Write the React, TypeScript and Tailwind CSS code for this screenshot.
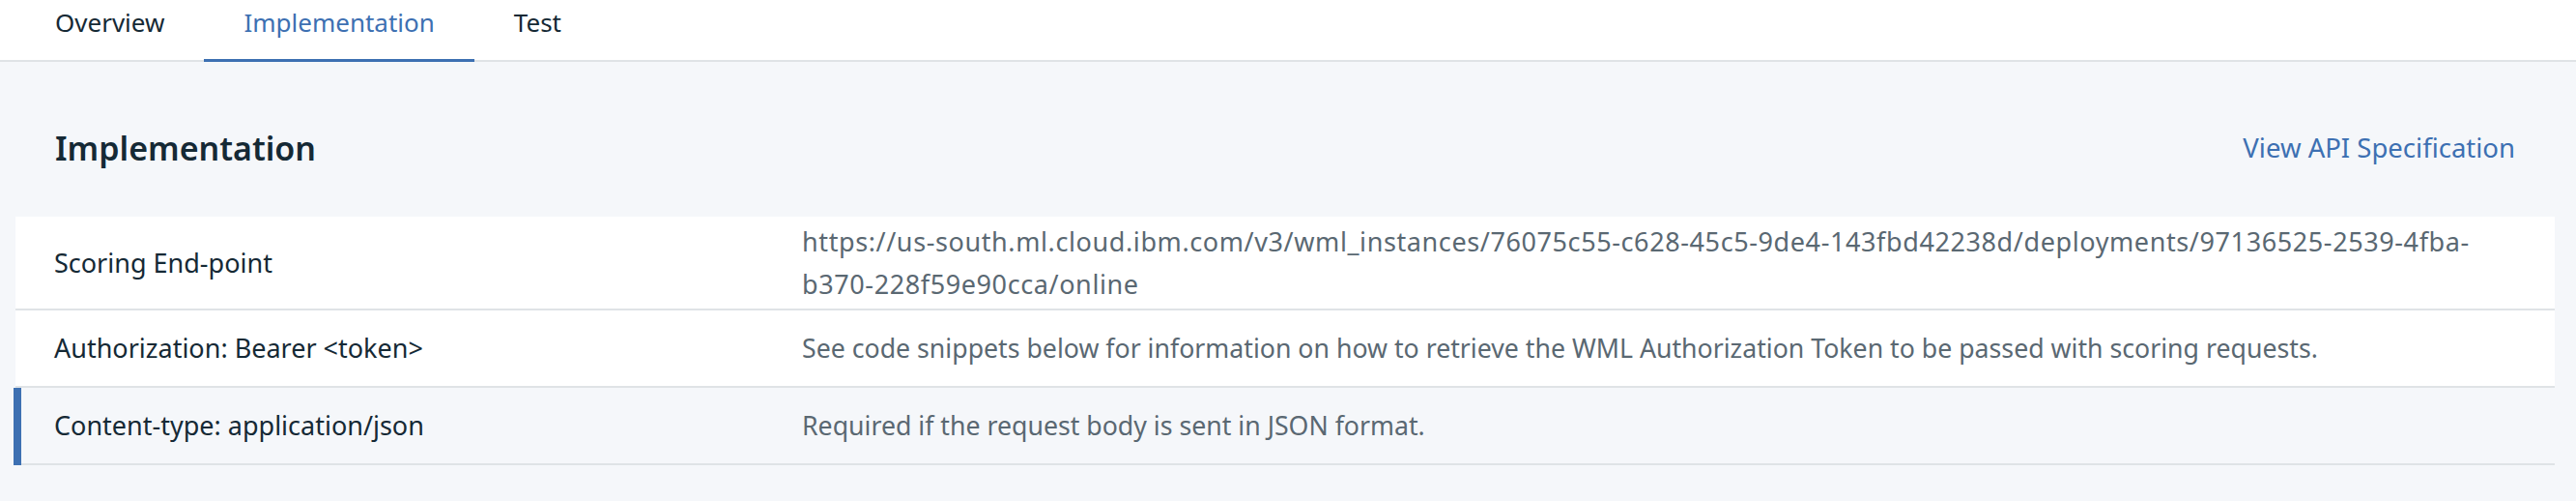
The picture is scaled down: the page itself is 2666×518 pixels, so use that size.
import React from 'react';

const FONT = "font-['Noto_Sans',_'Liberation_Sans',_sans-serif]";

const tabs = ['Overview', 'Implementation', 'Test'];

type Row = { label: string; value: React.ReactNode; active?: boolean; url?: boolean };

const rows: Row[] = [
  {
    label: 'Scoring End-point',
    value: (
      <>
        https://us-south.ml.cloud.ibm.com/v3/wml_instances/76075c55-c628-45c5-9de4-143fbd42238d/deployments/97136525-2539-4fba-
        <br />
        b370-228f59e90cca/online
      </>
    ),
    url: true,
  },
  {
    label: 'Authorization: Bearer <token>',
    value: 'See code snippets below for information on how to retrieve the WML Authorization Token to be passed with scoring requests.',
  },
  {
    label: 'Content-type: application/json',
    value: 'Required if the request body is sent in JSON format.',
    active: true,
  },
];

const App: React.FC = () => {
  const activeTab = 'Implementation';

  return (
    <div className={`${FONT} min-h-screen w-full bg-[#f5f7fa] text-[#152935]`}>
      {/* tabs */}
      <nav className="flex h-16 border-b-2 border-[#dfe3e6] bg-white pl-[16px]">
        {tabs.map(t => (
          <div
            key={t}
            className={`relative h-[62px] px-[41px] pt-[2px] text-[26px] leading-[43px] ${
              t === activeTab ? 'text-[#3d70b2]' : 'text-[#152935]'
            }`}
          >
            {t}
            {t === activeTab && <span className="absolute -bottom-[2px] left-0 right-0 h-[3px] bg-[#3d70b2]" />}
          </div>
        ))}
      </nav>

      <main className="pl-[16px] pr-[22px]">
        <div className="flex items-center justify-between px-[41px] pt-[56px] pb-[38px]">
          <h2 className="text-[34px] font-semibold leading-[66px] text-[#152935]">Implementation</h2>
          <a href="#" className="text-[27.5px] leading-[66px] text-[#3d70b2]">
            View API Specification
          </a>
        </div>

        <div className="flex flex-col">
          {rows.map(r => (
            <div
              key={r.label}
              className={`relative flex min-h-[80px] items-center border-b-2 border-[#dfe3e6] py-[4px] text-[27px] leading-[43.5px] ${
                r.active ? 'bg-[#f5f7fa]' : 'bg-white'
              }`}
            >
              {r.active && <span className="absolute -left-[2px] top-0 -bottom-[2px] w-[8px] bg-[#3d70b2]" />}
              <div className="w-[814px] shrink-0 pl-[40px] text-[#152935]">{r.label}</div>
              <div className={`flex-1 pr-[40px] text-[#5a6872] ${r.url ? 'tracking-[0.6px]' : 'text-[26.7px]'}`}>
                {r.value}
              </div>
            </div>
          ))}
        </div>
      </main>
    </div>
  );
};

export default App;
